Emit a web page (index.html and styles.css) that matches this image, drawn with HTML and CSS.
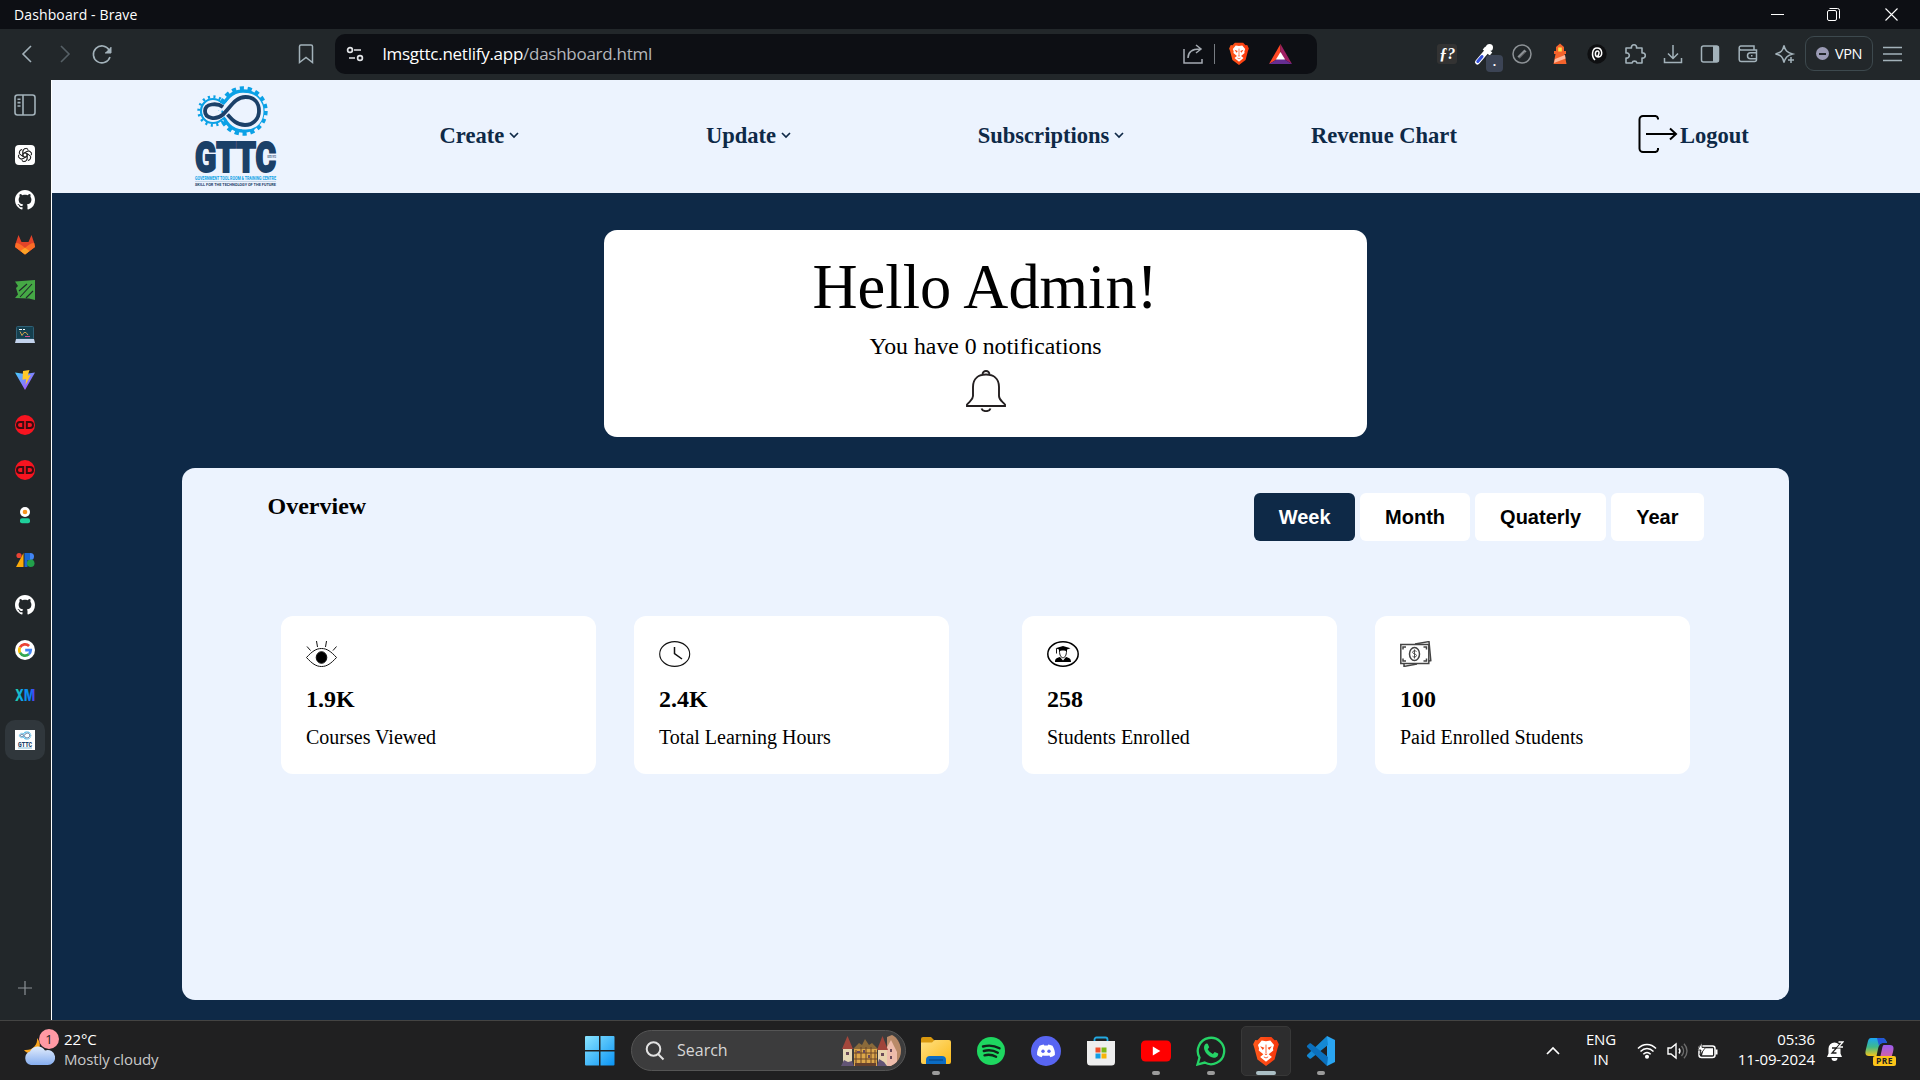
FILE: index.html
```html
<!DOCTYPE html>
<html lang="en">
<head>
<meta charset="utf-8">
<title>Dashboard - Brave</title>
<link rel="stylesheet" href="styles.css">
</head>
<body>
<svg width="0" height="0" class="defs" aria-hidden="true">
  <defs>
    <linearGradient id="g-win" x1="0" y1="0" x2="1" y2="1"><stop offset="0" stop-color="#8ae4ff"/><stop offset="1" stop-color="#0a94f5"/></linearGradient>
    <linearGradient id="g-folder" x1="0" y1="0" x2="1" y2="1"><stop offset="0" stop-color="#ffe083"/><stop offset="1" stop-color="#fbb917"/></linearGradient>
    <linearGradient id="g-vite" x1="0" y1="0" x2="1" y2="1"><stop offset="0" stop-color="#41d1ff"/><stop offset="1" stop-color="#bd34fe"/></linearGradient>
    <linearGradient id="g-xm" x1="0" y1="0" x2="1" y2="0"><stop offset="0" stop-color="#22d8a4"/><stop offset=".35" stop-color="#0ba5f2"/><stop offset=".8" stop-color="#0b78f2"/><stop offset="1" stop-color="#6a2cf5"/></linearGradient>
    <linearGradient id="g-cloud" x1="0" y1="0" x2="0" y2="1"><stop offset="0" stop-color="#e3edfc"/><stop offset="1" stop-color="#86aef0"/></linearGradient>
    <linearGradient id="g-cop1" x1="0" y1="0" x2="0" y2="1"><stop offset="0" stop-color="#1aa6f5"/><stop offset=".5" stop-color="#3fb98a"/><stop offset="1" stop-color="#f5c51b"/></linearGradient>
    <linearGradient id="g-cop2" x1="0" y1="0" x2="0" y2="1"><stop offset="0" stop-color="#9b5cf0"/><stop offset="1" stop-color="#f2657d"/></linearGradient>
    <linearGradient id="g-brave" x1="0" y1="0" x2="1" y2="0"><stop offset="0" stop-color="#ff5a1c"/><stop offset="1" stop-color="#f7350c"/></linearGradient>
    <symbol id="brave" viewBox="0 0 24 28">
      <path d="M7 1h10l3 3 2-.2 2 4-1.200 3.600L20 22l-8 6-8-6L1.200 11.400 0 7.800l2-4L4 4z" fill="url(#g-brave)"/>
      <path d="M12 5l4-.8 3.500 4.300-1 3 .3 2-4.300 3.500 3 2.500-5.500 4.500-5.500-4.500 3-2.500L5.200 13.500l.3-2-1-3L8 4.200z" fill="#fff"/>
      <path d="M6.500 9.500l4 1.500-1.500 2zM17.500 9.500l-4 1.500 1.500 2zM10.500 16.500h3L12 18z" fill="#fb4a16"/>
      <path d="M12 8v8M10 19.500l2 1 2-1" fill="none" stroke="#fb4a16" stroke-width=".8"/>
    </symbol>
    <symbol id="github" viewBox="0 0 16 16"><path fill="#fff" d="M8 0C3.580 0 0 3.580 0 8c0 3.540 2.290 6.530 5.470 7.590.4.070.55-.17.55-.38 0-.19-.01-.82-.01-1.490-2.010.37-2.530-.49-2.690-.94-.09-.23-.48-.94-.82-1.130-.28-.15-.68-.52-.01-.53.63-.01 1.080.58 1.230.82.720 1.210 1.870.87 2.330.66.070-.52.28-.87.510-1.070-1.780-.2-3.640-.89-3.640-3.950 0-.87.310-1.590.82-2.150-.08-.2-.36-1.020.08-2.120 0 0 .67-.21 2.200.82.640-.18 1.320-.27 2-.27s1.360.09 2 .27c1.530-1.040 2.200-.82 2.200-.82.440 1.100.16 1.920.08 2.120.510.56.82 1.270.82 2.150 0 3.070-1.870 3.750-3.650 3.950.29.25.54.73.54 1.480 0 1.070-.01 1.930-.01 2.200 0 .21.150.46.550.38A8.010 8.010 0 0 0 16 8c0-4.420-3.580-8-8-8z"/></symbol>
    <symbol id="dd" viewBox="0 0 20 20"><circle cx="10" cy="10" r="10" fill="#f81420"/><path d="M8.200 7v6H5a3 3 0 0 1 0-6zM11.800 7v6H15a3 3 0 0 0 0-6z" fill="none" stroke="#3a0d12" stroke-width="2"/></symbol>
    <symbol id="gears" viewBox="0 0 74 52">
      <circle cx="18" cy="26" r="14.200" fill="none" stroke="#0ba1e6" stroke-width="3" stroke-dasharray="2.100 3.477"/>
      <circle cx="18" cy="26" r="12" fill="none" stroke="#0ba1e6" stroke-width="2.200"/>
      <circle cx="48" cy="26" r="22.600" fill="none" stroke="#0ba1e6" stroke-width="4.200" stroke-dasharray="4.200 3.689"/>
      <circle cx="48" cy="26" r="20" fill="none" stroke="#0ba1e6" stroke-width="3.400"/>
      <path d="M27 29C21 34 11 35 11 26.500S21 18 28 24M31 28c5 6 11 13 20 13 9.500 0 14-6.500 14-14.500S60 11.500 50 11.500C40 11.500 34 20 28 26" fill="none" stroke="#ecf3fe" stroke-width="7"/>
      <path d="M28 22C22 17.500 10 18.500 10 26s11 9.500 18 3.500C35 23 40 12 50.500 12 60 12 64 18.500 64 26s-5.500 14-14 14C41.500 40 37 34.500 32.500 29.500" fill="none" stroke="#1b4068" stroke-width="3.800"/>
    </symbol>
  </defs>
</svg>

<header class="titlebar">
  <span class="title">Dashboard - Brave</span>
  <div class="winbtns">
    <svg width="57" height="29" viewBox="0 0 57 29"><path d="M22 14.500h13" stroke="#fff"/></svg>
    <svg width="57" height="29" viewBox="0 0 57 29" fill="none" stroke="#fff"><rect x="21.500" y="10.500" width="9" height="10" rx="1.500"/><path d="M23.500 8.500h8a2 2 0 0 1 2 2v8"/></svg>
    <svg width="57" height="29" viewBox="0 0 57 29"><path d="M22.500 8.500l12 12M34.500 8.500l-12 12" stroke="#fff" stroke-width="1.100"/></svg>
  </div>
</header>

<div class="toolbar">
  <div class="navbtns">
    <svg width="38" height="24" viewBox="0 0 38 24"><path d="M23 4l-8 8 8 8" fill="none" stroke="#a3b2ba" stroke-width="1.600"/></svg>
    <svg width="38" height="24" viewBox="0 0 38 24"><path d="M15 4l8 8-8 8" fill="none" stroke="#566066" stroke-width="1.600"/></svg>
    <svg width="38" height="24" viewBox="0 0 38 24"><path d="M25.200 8A8.500 8.500 0 1 0 26 15" fill="none" stroke="#a3b2ba" stroke-width="1.600"/><path d="M27 5v6h-6" fill="#a3b2ba" stroke="#a3b2ba"/></svg>
  </div>
  <svg class="bookmark" width="24" height="24" viewBox="0 0 24 24"><path d="M5.500 4.500a1.500 1.500 0 0 1 1.500-1.500h10a1.500 1.500 0 0 1 1.500 1.500V20.500L12 15.500 5.500 20.500z" fill="none" stroke="#a3b2ba" stroke-width="1.500"/></svg>
  <div class="address">
    <svg class="site" width="18" height="18" viewBox="0 0 18 18" fill="none" stroke="#e3e5e8" stroke-width="1.700"><circle cx="4" cy="5" r="2.400"/><path d="M8 5h7M3 13h6"/><circle cx="14" cy="13" r="2.400"/></svg>
    <span class="url">lmsgttc.netlify.app<i>/dashboard.html</i></span>
    <svg class="share" width="22" height="22" viewBox="0 0 22 22" fill="none" stroke="#a5abb2" stroke-width="1.500"><path d="M2 6v14h18v-4M6 15c0-6 4-9 12-9M14 2l5 4-5 4"/></svg>
    <span class="bar"></span>
    <svg class="shield" width="20" height="23"><use href="#brave"/></svg>
    <svg class="bat" width="23" height="20" viewBox="0 0 23 20"><path d="M11.500 0L0 20l11.500-7z" fill="#ff4724"/><path d="M11.500 0L23 20l-11.500-7z" fill="#9e1f63"/><path d="M0 20h23l-11.500-7z" fill="#662d91"/><path d="M11.500 8l4.600 7.500H6.900z" fill="#fff"/></svg>
  </div>
  <div class="exts">
    <span class="cell"><b class="fq">ƒ?</b></span>
    <span class="cell pick"><svg width="24" height="24" viewBox="0 0 24 24"><path d="M4.500 20L13 10" stroke="#fff" stroke-width="5" stroke-linecap="round"/><path d="M4.800 19.500L9 14.500" stroke="#3550d8" stroke-width="3" stroke-linecap="round"/><path d="M11 6l7 6M13 8l3-4" stroke="#fff" stroke-width="4"/><circle cx="16.500" cy="5.500" r="3.500" fill="#fff"/></svg><em>.</em></span>
    <span class="cell"><svg width="20" height="20" viewBox="0 0 20 20"><circle cx="10" cy="10" r="9" fill="none" stroke="#8d9296" stroke-width="1.500"/><path d="M6.500 13.500l7-7" stroke="#8d9296" stroke-width="3"/><path d="M7.500 14l6-6" stroke="#444" stroke-width="1"/></svg></span>
    <span class="cell"><svg width="18" height="22" viewBox="0 0 18 22"><path d="M5 4l4-3.500L13 4v4h2v3h-1.500l2 10h-13l2-10H3V8h2z" fill="#f4632c"/><path d="M4 16l10-4 .6 3.500L3 20z" fill="#ffb89c"/><rect x="7.200" y="4.500" width="3.600" height="4" fill="#ffe14d"/></svg></span>
    <span class="cell"><svg width="20" height="20" viewBox="0 0 20 20"><circle cx="10" cy="10" r="9.700" fill="#0e0f11"/><path d="M8 16c-4-4-3-12 2-12 6 0 6 9 1.500 9S8 7 10.500 7s1.500 4.500-.5 6" fill="none" stroke="#fff" stroke-width="1.500"/></svg></span>
    <span class="cell"><svg width="22" height="22" viewBox="0 0 22 22"><path d="M2 5h5.500a2.600 2.600 0 1 1 5 0H18v5a2.600 2.600 0 1 1 0 5v5h-5a2.600 2.600 0 0 0-5 0H2v-5a2.600 2.600 0 1 0 0-5z" fill="none" stroke="#a3b2ba" stroke-width="1.600" stroke-linejoin="round"/></svg></span>
    <span class="cell"><svg width="20" height="20" viewBox="0 0 20 20" fill="none" stroke="#a3b2ba" stroke-width="1.500"><path d="M10 1v13M5 9.500l5 5 5-5M1.500 14v4.500h17V14"/></svg></span>
    <span class="cell"><svg width="20" height="20" viewBox="0 0 20 20"><rect x="1.500" y="2" width="17" height="16" rx="2" fill="none" stroke="#a3b2ba" stroke-width="1.500"/><path d="M13 2h4a2 2 0 0 1 2 2v12a2 2 0 0 1-2 2h-4z" fill="#a3b2ba"/></svg></span>
    <span class="cell"><svg width="20" height="20" viewBox="0 0 20 20" fill="none" stroke="#a3b2ba" stroke-width="1.500"><path d="M16 6V2H3a1.800 1.800 0 0 0-1.800 2v11.500A2 2 0 0 0 3 17.500h13.500a2 2 0 0 0 2-2V6H3a2 2 0 0 1-1.800-2M18.500 8.800h-6a3 3 0 0 0 0 6h6M13 11.800h1.500"/></svg></span>
    <span class="cell"><svg width="22" height="22" viewBox="0 0 22 22" fill="none" stroke="#a3b2ba" stroke-width="1.500"><path d="M10 2.500c1 5 3 7 8.500 8.500-3 .8-4.500 1.500-5.800 3-1.200 1.300-2 3-2.700 5.500C8.800 14 7 12 1.500 11 7 9.500 8.800 8 10 2.500zM17 14v6M14 17h6"/></svg></span>
    <span class="vpn"><i></i>VPN</span>
    <svg class="menu" width="20" height="18" viewBox="0 0 20 18"><path d="M0 2.500h19M0 9h19M0 15.500h19" stroke="#a3b2ba" stroke-width="1.500"/></svg>
  </div>
</div>

<div class="middle">
  <aside class="side">
    <span class="tab first"><svg width="22" height="22" viewBox="0 0 22 22" fill="none" stroke="#a3b2ba" stroke-width="1.600"><rect x="1" y="1" width="20" height="20" rx="2.500"/><path d="M9 1v20M3.500 5.200h3M3.500 8.600h3M3.500 12h3"/></svg></span>
    <span class="tab"><svg width="20" height="20" viewBox="0 0 20 20"><rect width="20" height="20" rx="4" fill="#fff"/><g fill="none" stroke="#222" stroke-width=".8"><path id="k" d="M10 12.300L8 11.200V6.500a3 3 0 0 1 5.400-1.800M8 8.600l4-2.400a3 3 0 0 1 4.300 3.600"/><use href="#k" transform="rotate(60 10 10)"/><use href="#k" transform="rotate(120 10 10)"/><use href="#k" transform="rotate(180 10 10)"/><use href="#k" transform="rotate(240 10 10)"/><use href="#k" transform="rotate(300 10 10)"/></g></svg></span>
    <span class="tab"><svg width="20" height="20"><use href="#github"/></svg></span>
    <span class="tab"><svg width="20" height="20" viewBox="0 0 20 20"><path d="M10 19.500L0 12 .8 8 3.500 0l3 7h7l3-7 2.700 8 .8 4z" fill="#e24329"/><path d="M10 19.500L0 12l.8-4C4 8 7 10 10 13c3-3 6-5 9.200-5l.8 4z" fill="#fc6d26"/><path d="M10 19.500l-4.500-3.500L10 12.700l4.500 3.300z" fill="#fca326"/></svg></span>
    <span class="tab"><svg width="20" height="20" viewBox="0 0 20 20"><path d="M0 1.500L20 0v20l-6-1.500L0 18l3-3.500L1 8l2-2z" fill="#45a845"/><path d="M4 11l8-7M5 17L17 4M11 18l7-7" stroke="#20292a" stroke-width="1.100"/></svg></span>
    <span class="tab"><svg width="20" height="20" viewBox="0 0 20 20"><rect x="1.500" y="1.500" width="17" height="12.500" rx="1" fill="#15404f" stroke="#2f6076"/><path d="M4 4.500h3M8 4.500h2" stroke="#fff" stroke-width="1.200"/><path d="M5 6.500l2 4 2-3h2l2 2.500" stroke="#c9a14e" fill="none" stroke-width="1"/><path d="M10 11.500h5" stroke="#d2518c"/><path d="M1 14h18l1 4H0z" fill="#c3d3ec"/></svg></span>
    <span class="tab"><svg width="20" height="20" viewBox="0 0 20 20"><path d="M0 2.500L10 20 20 2.500 10 4z" fill="url(#g-vite)"/><path d="M8 1l6.500-1-1.800 5.500 3-.5L10.500 15l.7-6-3.700.8z" fill="#ffc928"/></svg></span>
    <span class="tab"><svg width="20" height="20"><use href="#dd"/></svg></span>
    <span class="tab"><svg width="20" height="20"><use href="#dd"/></svg></span>
    <span class="tab"><svg width="20" height="20" viewBox="0 0 20 20"><circle cx="10" cy="7" r="5" fill="#fff"/><circle cx="10" cy="7" r="2.300" fill="#f7941d"/><rect x="5" y="13.300" width="10" height="5" rx="2" fill="#1fcf9b"/></svg></span>
    <span class="tab"><svg width="20" height="20" viewBox="0 0 20 20"><circle cx="4" cy="5.500" r="2.600" fill="#ea4335"/><path d="M1 17L8.500 3v14z" fill="#fbab0a"/><path d="M9.500 3h3v14h-3z" fill="#1a67d2"/><circle cx="15.500" cy="6.500" r="3.500" fill="#4285f4"/><circle cx="15.700" cy="13.200" r="3.800" fill="#22a04b"/><path d="M12 3h3v7h-3z" fill="#1967d2"/></svg></span>
    <span class="tab"><svg width="20" height="20"><use href="#github"/></svg></span>
    <span class="tab"><svg width="20" height="20" viewBox="0 0 20 20"><circle cx="10" cy="10" r="10" fill="#fff"/><g fill="none" stroke-width="2.700"><path d="M14.100 6A5.700 5.700 0 0 0 5 7.300" stroke="#ea4335"/><path d="M5 7.300a5.700 5.700 0 0 0 0 5.500" stroke="#fbbc05"/><path d="M5 12.700a5.700 5.700 0 0 0 8.800 1.500" stroke="#34a853"/><path d="M13.800 14.200a5.700 5.700 0 0 0 1.900-4H10.200" stroke="#4285f4"/></g></svg></span>
    <span class="tab"><svg class="spill" width="24" height="24" viewBox="0 0 24 24"><text x="2" y="17.500" textLength="20" lengthAdjust="spacingAndGlyphs" font-family="Inter, sans-serif" font-weight="800" font-size="15.500" fill="url(#g-xm)">XM</text></svg></span>
    <span class="tab"><span class="chosen"><svg class="spill" width="20" height="20" viewBox="0 0 20 20"><rect width="20" height="20" fill="#fff"/><use href="#gears" x="3" y="1" width="14" height="9"/><text x="3" y="16.500" textLength="14" lengthAdjust="spacingAndGlyphs" font-family="Roboto, sans-serif" font-weight="900" font-size="7.500" fill="#1b4068">GTTC</text><path d="M3 18h14" stroke="#69a9cc" stroke-width=".8"/></svg></span></span>
    <span class="plus"><svg width="14" height="14" viewBox="0 0 14 14"><path d="M7 0v14M0 7h14" stroke="#8b9196" stroke-width="1.200"/></svg></span>
  </aside>

  <main class="page">
    <nav class="nav">
      <svg class="logo spill" width="90" height="106" viewBox="0 0 90 106">
        <use href="#gears" x="3" y="1" width="74" height="52"/>
        <text x="3" y="87.500" textLength="81" lengthAdjust="spacingAndGlyphs" font-family="Roboto, sans-serif" font-weight="900" font-size="43" fill="#1b4068" stroke="#1b4068" stroke-width="2">GTTC</text>
        <rect x="74" y="70.500" width="11" height="3.500" fill="#ecf3fe"/>
        <text x="75.500" y="73.500" textLength="8.500" lengthAdjust="spacingAndGlyphs" font-family="Roboto, sans-serif" font-size="3" fill="#1b4068">ESTD 1972</text>
        <text x="3" y="95.500" textLength="81" lengthAdjust="spacingAndGlyphs" font-family="Roboto, sans-serif" font-weight="700" font-size="5.800" fill="#0ba1e6">GOVERNMENT TOOL ROOM &amp; TRAINING CENTRE</text>
        <path d="M3 97.500h81" stroke="#b8cbe0" stroke-width=".8"/>
        <text x="3" y="102.300" textLength="81" lengthAdjust="spacingAndGlyphs" font-family="Roboto, sans-serif" font-weight="700" font-size="4.200" fill="#1b4068">SKILL FOR THE TECHNOLOGY OF THE FUTURE</text>
      </svg>
      <ul class="links">
        <li>Create<svg width="10" height="7" viewBox="0 0 10 7"><path d="M1 1l4 4 4-4" fill="none" stroke="#0f2947" stroke-width="1.700"/></svg></li>
        <li>Update<svg width="10" height="7" viewBox="0 0 10 7"><path d="M1 1l4 4 4-4" fill="none" stroke="#0f2947" stroke-width="1.700"/></svg></li>
        <li>Subscriptions<svg width="10" height="7" viewBox="0 0 10 7"><path d="M1 1l4 4 4-4" fill="none" stroke="#0f2947" stroke-width="1.700"/></svg></li>
        <li>Revenue Chart</li>
      </ul>
      <span class="logout"><svg width="40" height="40" viewBox="0 0 40 40" fill="none" stroke="#000" stroke-width="2"><path d="M20 5.500V4.500A3 3 0 0 0 17.500 2H5a3.500 3.500 0 0 0-3.500 3.500v29A3.500 3.500 0 0 0 5 38h12.500A3 3 0 0 0 20 35.500V34M8 20h29M32 14.500l6 5.500-6 5.500"/></svg>Logout</span>
    </nav>

    <section class="hello">
      <h1>Hello Admin!</h1>
      <p>You have 0 notifications</p>
      <svg width="40" height="42" viewBox="0 0 40 42" fill="none" stroke="#231f20" stroke-width="1.900"><path d="M16.500 5V4.500A3.500 3.500 0 0 1 23.500 4.500V5M1 34.500C4 31 7 30 7 26V17C7 8 13 4.500 20 4.500S33 8 33 17v9c0 4 3 5 6 8.500V36H1zM15.500 38.500c1 3.500 8 3.500 9 0"/></svg>
    </section>

    <section class="overview">
      <div class="head">
        <h2>Overview</h2>
        <div class="tabs"><button class="on">Week</button><button>Month</button><button>Quaterly</button><button>Year</button></div>
      </div>
      <div class="stats">
        <div class="pair">
          <article><svg width="32" height="26" viewBox="0 0 32 26" fill="none" stroke="#111"><path d="M.5 16.500C6 10.500 10 7.500 15.500 7.500S25 10.500 30.500 16.500C25 22.500 21 25.500 15.500 25.500S6 22.500.5 16.500z"/><ellipse cx="15.500" cy="16.500" rx="5.300" ry="5.800" fill="#000"/><path d="M1 5.500l3.500 4M10.500 0l1 6M20.500 0l-1 6M30.500 5.500l-3.500 4"/></svg><strong>1.9K</strong><span>Courses Viewed</span></article>
          <article><svg width="32" height="26" viewBox="0 0 32 26" fill="none" stroke="#111" stroke-width="1.100"><ellipse cx="15.700" cy="13" rx="15" ry="12.400"/><path d="M15.500 6v6.500l7.500 5.500" stroke-width="1.500"/></svg><strong>2.4K</strong><span>Total Learning Hours</span></article>
        </div>
        <div class="pair">
          <article><svg width="32" height="26" viewBox="0 0 32 26"><ellipse cx="16" cy="13" rx="15.200" ry="12.200" fill="none" stroke="#000" stroke-width="1.500"/><path d="M8.500 7.300L16 5l7.500 2.300L20 8.500v1.800c-2-1-6-1-8 0V8.500zM8 21c0-3.500 2-4.200 5-5l3 3.500 3-3.500c3 .8 5 1.500 5 5z"/><path d="M12.500 10c0 9 7 9 7 0M9.500 7.500v5" fill="none" stroke="#000" stroke-width=".9"/></svg><strong>258</strong><span>Students Enrolled</span></article>
          <article><svg width="32" height="26" viewBox="0 0 32 26" fill="none" stroke="#444" stroke-width="1.500"><rect x=".8" y="3.500" width="28" height="19"/><path d="M15 3l14-2.400 1.800 19L29 20M4 23v2.400L17 23"/><ellipse cx="14.500" cy="13" rx="5" ry="6.500"/><path d="M3 8.500V6h3M23.500 6h3v2.500M3 17.500V20h3M23.500 20h3v-2.500" /><path d="M16.500 10.500c-1-1.200-4-.8-4 .8s4 1.500 4 3.200-3 2-4 .7M14.500 8.500v9" stroke-width=".9"/></svg><strong>100</strong><span>Paid Enrolled Students</span></article>
        </div>
      </div>
    </section>
  </main>
</div>

<footer class="taskbar">
  <div class="weather">
    <span class="wicon"><svg width="32" height="32" viewBox="0 0 32 32"><path d="M14 3c1 7-5 13-13 12 2 3 6 4 10 3 6-2 8-9 3-15z" fill="#f9a51f"/><path d="M8 30a7 7 0 0 1-1-13.500 8.500 8.500 0 0 1 15-1A7.500 7.500 0 1 1 24 30z" fill="url(#g-cloud)"/></svg><b>1</b></span>
    <p><span>22°C</span><small>Mostly cloudy</small></p>
  </div>
  <div class="dock">
    <svg class="start" width="30" height="30" viewBox="0 0 30 30"><path d="M0 1a1 1 0 0 1 1-1h13v14H0zM15.500 0H28.500a1 1 0 0 1 1 1v13h-14zM0 15.500h14v14H1a1 1 0 0 1-1-1zM15.500 15.500h14v13a1 1 0 0 1-1 1h-13z" fill="url(#g-win)"/></svg>
    <div class="search">
      <svg width="20" height="20" viewBox="0 0 20 20" fill="none" stroke="#e2e2e2" stroke-width="2"><circle cx="8.500" cy="8" r="6.800"/><path d="M13 13l5.500 5.500"/></svg>
      <span>Search</span>
      <svg class="town" width="60" height="32" viewBox="0 0 60 32">
        <path d="M46 2l5-2c5 2 8 8 9 14v10l-4 7H46z" fill="#b98a68"/><path d="M45 14l5-9 6 12v14H45z" fill="#eebcab"/>
        <path d="M2 14h9v17H2z" fill="#e6d9b5"/><path d="M1 14L6.500 1 12 14z" fill="#a4473c"/>
        <path d="M37 15h9v16h-9z" fill="#e9d3ad"/><path d="M36 15l5.500-14L47 15z" fill="#a0443a"/>
        <path d="M13 13h23v18H13z" fill="#dba64a"/><path d="M12 14l6-6 3 2 3-6 4 6 3-2 6 6z" fill="#8a6a3a"/>
        <path d="M15 15v16M20 12v19M25 12v19M30 12v19M34 15v16M13 18h23M13 24h23" stroke="#6b4526" stroke-width="1"/>
        <path d="M16 16h3v2h-3zM22 15h2v3h-2zM27 20h2v3h-2zM5 17h3v3H5zM40 18h3v3h-3zM49 14h2v3h-2zM49 21h2v3h-2z" fill="#6b4b59"/>
        <path d="M0 31l3-6 4 2 4-1 2 5zM36 31l2-7 5 3 3 4z" fill="#625475"/><path d="M14 28h21v3H14z" fill="#66412d"/>
      </svg>
    </div>
    <span class="app"><svg width="30" height="30" viewBox="0 0 30 30"><path d="M0 3a2 2 0 0 1 2-2h8l3 3v6H0z" fill="#d9980f"/><path d="M0 6.500h11L13.500 4H28a2 2 0 0 1 2 2v20a2 2 0 0 1-2 2H2a2 2 0 0 1-2-2z" fill="url(#g-folder)"/><path d="M5 28v-4a4 4 0 0 1 4-4h12a4 4 0 0 1 4 4v4z" fill="#0b6cc4"/><path d="M8 24h14" stroke="#084a8c" stroke-width="1.300"/></svg><i></i></span>
    <span class="app"><svg width="28" height="28" viewBox="0 0 28 28"><circle cx="14" cy="14" r="14" fill="#1ed760"/><path d="M6 9.500c6-1.700 11.500-1 16.500 1.800M6.800 14c5-1.300 9.700-.8 14 1.700M7.500 18.300c4.300-1 8-.5 11.600 1.400" fill="none" stroke="#10241a" stroke-width="2.400" stroke-linecap="round"/></svg></span>
    <span class="app"><svg width="30" height="30" viewBox="0 0 30 30"><circle cx="15" cy="15" r="15" fill="#5865f2"/><path d="M8.500 9.800c1.500-.8 3-1.200 4.200-1.300l.6 1.100h3.400l.6-1.100c1.200.1 2.700.5 4.200 1.300 1.700 2.700 2.700 6 2.400 9.300-1.500 1.200-3 1.800-4.400 2.200l-1.200-1.900c-2 .6-4.600.6-6.600 0l-1.200 1.900c-1.400-.4-2.900-1-4.400-2.200-.3-3.300.7-6.600 2.400-9.300z" fill="#fff"/><circle cx="12" cy="15.300" r="1.700" fill="#5865f2"/><circle cx="18" cy="15.300" r="1.700" fill="#5865f2"/></svg></span>
    <span class="app"><svg width="30" height="30" viewBox="0 0 30 30"><path d="M8.500 6V3.500A2 2 0 0 1 10.500 1.500h9a2 2 0 0 1 2 2V6" fill="none" stroke="#23a9e1" stroke-width="1.800"/><path d="M1 5h28v21a3.500 3.500 0 0 1-3.500 3.500h-21A3.500 3.500 0 0 1 1 26z" fill="#eee"/><path d="M9.500 11.500h5v5h-5z" fill="#f04f2a"/><path d="M15.500 11.500h5v5h-5z" fill="#7cb714"/><path d="M9.500 17.500h5v5h-5z" fill="#129fe6"/><path d="M15.500 17.500h5v5h-5z" fill="#f7b408"/></svg></span>
    <span class="app"><svg width="30" height="30" viewBox="0 0 30 30"><rect x="0" y="4.500" width="30" height="21" rx="4.500" fill="#f00"/><path d="M11.800 10.500l7.500 4.500-7.500 4.500z" fill="#fff"/></svg><i></i></span>
    <span class="app"><svg width="30" height="30" viewBox="0 0 30 30"><path d="M1.500 28.500l2-7A13.200 13.200 0 1 1 8.700 26.600z" fill="none" stroke="#25d366" stroke-width="2.300"/><path d="M10.500 7.500l1.200.2 1.500 3.500-1.500 2c1.200 2.300 3 3.700 5.200 4.700l1.800-2 3.500 1.700c.3 3-2.300 4.500-4.500 4.200C12.500 21 8 15.500 8 11.700c0-1.800 1-3.700 2.500-4.200z" fill="#25d366"/></svg><i></i></span>
    <span class="app active"><svg width="26" height="30"><use href="#brave"/></svg><i></i></span>
    <span class="app"><svg width="30" height="30" viewBox="0 0 30 30"><path d="M21 0l8 4v22l-8 4z" fill="#2aa5f2"/><path d="M21 0L1.500 18.500c-.8.700-.8 1.500 0 2.200L3.500 22.500c.5.400 1 .4 1.500 0L22 9z" fill="#1489d4"/><path d="M21 30L1.500 11.500c-.8-.7-.8-1.500 0-2.200L3.500 7.500c.5-.4 1-.4 1.500 0L22 21z" fill="#0b70bd"/></svg><i></i></span>
  </div>
  <div class="tray">
    <svg class="up" width="14" height="10" viewBox="0 0 14 10"><path d="M1 8l6-6 6 6" fill="none" stroke="#fff" stroke-width="1.700"/></svg>
    <p class="lang">ENG<br>IN</p>
    <svg class="wifi" width="20" height="18" viewBox="0 0 20 18" fill="none" stroke="#fff" stroke-width="1.500"><path d="M1 6.500c5-5.500 13-5.500 18 0M3.500 9.500c4-4 9-4 13 0M6.300 12.300c2.300-2.200 5.100-2.200 7.400 0"/><circle cx="10" cy="14.800" r="1.300" fill="#fff"/></svg>
    <svg class="vol" width="21" height="18" viewBox="0 0 21 18" fill="none" stroke="#fff" stroke-width="1.400"><path d="M1 6v6h3l5 4V2L4 6zM12 6.500c1.200 1.600 1.200 3.400 0 5"/><path d="M14.500 4c2.700 3 2.700 7 0 10M17 1.800c4 4.300 4 10 0 14.400" stroke="#6c6c6c"/></svg>
    <svg class="battery" width="21" height="18" viewBox="0 0 21 18"><rect x="2" y="4" width="16" height="11.500" rx="2.500" fill="none" stroke="#fff" stroke-width="1.500"/><path d="M7 6.300h9v7H5z" fill="#fff"/><path d="M18.500 7.500v5h2v-5z" fill="#fff"/><path d="M5 .5L.5 8H4l-1 5 5.500-7.500H5z" fill="#fff" stroke="#202020" stroke-width=".8"/></svg>
    <p class="clock">05:36<br>11-09-2024</p>
    <svg class="bell" width="18" height="20" viewBox="0 0 18 20"><path d="M1 16l1.500-3.500V7.500a6 6 0 0 1 12 0v5L16 16zM5.500 17h6a3 3 0 0 1-6 0z" fill="#fff"/><path d="M6 7h4.500L6 12h4.500" fill="none" stroke="#202020" stroke-width="1.300"/><path d="M12.500 1H17l-4.500 5H17" fill="none" stroke="#202020" stroke-width="3"/><path d="M12.500 1H17l-4.500 5H17" fill="none" stroke="#fff" stroke-width="1.300"/></svg>
    <span class="copilot"><svg width="30" height="28" viewBox="0 0 30 28"><path d="M6 1h11c3 0 4 2 5 5h-4c-3 0-4 2-5 6l-1.500 7H4c-4 0-4-3-3-7l2-8C3.500 2 4.500 1 6 1z" fill="url(#g-cop1)"/><path d="M17 1c3 0 4 2 5 5h-4c-2 0-3 1-4 3L12 1z" fill="#2456d8"/><path d="M19 8h6c4 0 4 3 3 7l-2 7c-1 3-2 4-5 4H9c3 0 5-1 6-5l2-9c.4-2 .8-4 2-4z" fill="url(#g-cop2)"/></svg><b>PRE</b></span>
  </div>
</footer>
</body>
</html>
```
FILE: styles.css
```css
* { box-sizing: border-box; }
body {
  margin: 0;
  width: 1920px;
  height: 1080px;
  overflow: hidden;
  display: flex;
  flex-direction: column;
  background: #22272a;
  font-family: "Liberation Serif", serif;
}
svg { display: block; flex: none; }
.spill { overflow: visible; }
p, h1, h2, ul { margin: 0; padding: 0; }
p, h1 { font-weight: normal; }
.defs { position: absolute; }

/* Browser window */
.titlebar, .toolbar, .side, .taskbar { font-family: "Open Sans", "Noto Sans", sans-serif; }
.titlebar {
  height: 29px;
  flex: none;
  display: flex;
  align-items: center;
  justify-content: space-between;
  background: #0d0f14;
  color: #fff;
}
.title { padding-left: 14px; font-size: 14px; letter-spacing: 0.12px; }
.winbtns { display: flex; }
.toolbar { height: 51px; flex: none; display: flex; align-items: center; padding-bottom: 2px; background: #22272a; }
.navbtns { display: flex; padding-left: 8px; }
.bookmark { margin-left: 172px; }
.address {
  width: 982px;
  height: 40px;
  margin: 1px 0 0 17px;
  padding-bottom: 1px;
  display: flex;
  align-items: center;
  border-radius: 10px;
  background: #0d0f14;
}
.site { margin-left: 11px; }
.url { width: 798px; margin-left: 18.500px; color: #fff; font-size: 17px; letter-spacing: -0.27px; line-height: 24px; white-space: nowrap; }
.url i { font-style: normal; color: #b5b8bc; }
.share { margin-left: 1px; }
.bar { width: 1px; height: 20px; margin: 0 14px 0 10px; background: #777c82; }
.bat { margin-left: 20px; }
.exts { display: flex; align-items: center; margin-left: 111.500px; }
.cell { width: 37.550px; height: 30px; display: flex; align-items: center; justify-content: center; position: relative; }
.fq { width: 20px; height: 20px; border-radius: 3px; background: #333; color: #fff; font: italic bold 16px/19px "Liberation Serif", serif; text-align: center; }
.pick em {
  position: absolute;
  left: 20px;
  top: 16px;
  width: 17px;
  height: 17px;
  border-radius: 4px;
  background: #3c4455;
  color: #fff;
  font: bold 12px/14px "Open Sans", sans-serif;
  text-align: center;
}
.vpn {
  width: 68px;
  height: 35px;
  margin-left: 1px;
  display: flex;
  align-items: center;
  justify-content: center;
  gap: 6px;
  border: 1px solid #3d494e;
  border-radius: 9px;
  color: #fff;
  font-size: 14.500px;
  letter-spacing: -0.4px;
}
.vpn i { width: 13px; height: 13px; border-radius: 50%; background: linear-gradient(#22272a, #22272a) center / 7px 2px no-repeat #9b9bb5; }
.menu { margin-left: 10px; }

.middle { height: 940px; flex: none; display: flex; }
.side { width: 52px; display: flex; flex-direction: column; border-right: 1px solid #fff; }
.tab { width: 50px; height: 45px; display: flex; align-items: center; justify-content: center; }
.tab.first { height: 50px; margin-bottom: 2.500px; }
.chosen { width: 40px; height: 40px; flex: none; display: flex; align-items: center; justify-content: center; border-radius: 10px; background: #30373c; }
.plus { margin: auto 0 25px 18px; }

/* Dashboard */
.page { width: 1868px; display: flex; flex-direction: column; align-items: center; background: #0e2947; }
.nav { width: 100%; height: 113px; flex: none; display: flex; align-items: center; background: #ecf3fe; color: #0e2947; font-size: 22.550px; font-weight: bold; }
.logo { margin-left: 140px; }
.links { display: flex; gap: 187.200px; margin-left: 157.500px; list-style: none; }
.links li { display: flex; align-items: center; gap: 4.500px; }
.links, .logout { height: 26px; margin-top: -2px; line-height: 26px; }
.logout { display: flex; align-items: center; gap: 2px; margin-left: 181px; }
.logout svg { margin-top: -3px; }

.hello { width: 763px; height: 207px; flex: none; margin: 37px 2px 0 0; padding-top: 22px; display: flex; flex-direction: column; align-items: center; border-radius: 13px; background: #fff; }
.hello h1 { font-size: 62.400px; line-height: 70px; }
.hello p { margin: 10px 0 0 1px; font-size: 23.800px; line-height: 28px; }
.hello svg { margin: 10px 0 0 1px; }

.overview { width: 1607px; height: 532px; flex: none; margin: 31px 2px 0 0; border-radius: 13px; background: #ecf3fe; }
.head { display: flex; justify-content: space-between; padding: 25px 85px 0 86px; }
.head h2 { font-size: 24px; line-height: 27px; }
.tabs { display: flex; gap: 5px; }
.tabs button { height: 48px; padding: 0 25px; border: 0; border-radius: 6px; background: #fff; color: #000; font: bold 20px "Liberation Sans", sans-serif; }
.tabs .on { padding: 0 24.500px; background: #0e2947; color: #fff; }
.stats { display: flex; gap: 73px; padding: 75px 99px 0; }
.pair { display: flex; gap: 38px; }
article { width: 315px; height: 158px; padding: 25px; display: flex; flex-direction: column; border-radius: 12px; background: #fff; }
article strong { margin: 18px 0 0 0.500px; font-size: 24px; line-height: 28px; }
article span { margin: 13px 0 0 0.500px; font-size: 20px; line-height: 23px; }

/* Desktop taskbar */
.taskbar { height: 60px; flex: none; display: flex; align-items: center; border-top: 1px solid #444443; background: #202021; color: #fff; }
.weather { width: 585px; display: flex; align-items: center; padding-left: 23px; }
.wicon { position: relative; }
.wicon b { position: absolute; left: 16px; top: -6px; width: 20px; height: 20px; border-radius: 50%; background: #ff99a4; color: #222; font-size: 13px; font-weight: normal; line-height: 20px; text-align: center; }
.weather p { margin: -4px 0 0 9px; display: flex; flex-direction: column; font-size: 15px; line-height: 20px; letter-spacing: -0.13px; }
.weather small { color: #c9c9c9; font-size: 15px; }
.dock { display: flex; align-items: center; }
.search { width: 275px; height: 41px; margin: 0 3px 0 16px; padding: 0 4px 0 13px; display: flex; align-items: center; border: 1px solid #555; border-radius: 21px; background: #3c3c3d; }
.search span { margin: -1px 0 0 12px; color: #d6d6d6; font-size: 16px; }
.town { margin-left: auto; border-radius: 0 0 16px 0; }
.app { position: relative; width: 50px; height: 50px; margin: 0 2.500px; left: -0.800px; display: flex; align-items: center; justify-content: center; border-radius: 5px; }
.app i { position: absolute; left: 21px; bottom: 1px; width: 8px; height: 4px; border-radius: 2px; background: #9b9b9b; }
.active { border: 1px solid #383838; background: #2d2d2e; }
.active i { left: 14px; bottom: 0; width: 20px; background: #abbfc5; }
.tray { margin-left: auto; display: flex; align-items: center; font-size: 15px; line-height: 20px; letter-spacing: -0.1px; }
.tray p { margin-top: -3px; }
.tray .lang { width: 42px; margin-left: 20px; text-align: center; }
.wifi { margin-left: 15px; }
.vol { margin-left: 10px; }
.battery { margin-left: 9px; }
.tray .clock { width: 90px; margin-left: 7px; text-align: right; }
.bell { margin-left: 11px; }
.copilot { position: relative; margin: 0 25px 0 21px; }
.copilot b { position: absolute; right: -1px; bottom: -1px; width: 23px; height: 10px; border-radius: 2px; background: #fcc419; color: #222; font-size: 8.500px; line-height: 10px; letter-spacing: 0.5px; text-align: center; }
```
